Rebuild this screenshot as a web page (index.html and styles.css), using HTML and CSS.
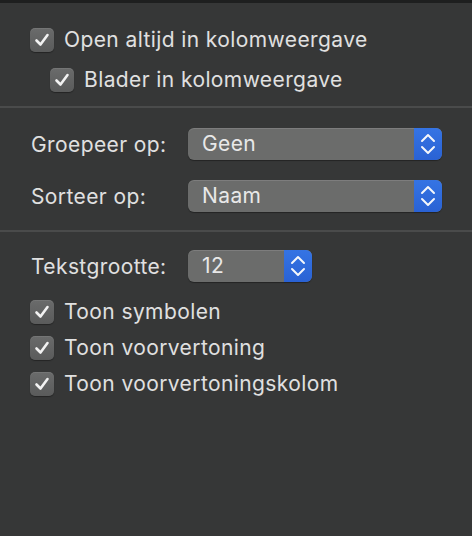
FILE: index.html
```html
<!DOCTYPE html>
<html>
<head>
<meta charset="utf-8">
<link rel="stylesheet" href="styles.css">
</head>
<body>
<div class="window">
  <section class="sec sec1">
    <label class="check-row">
      <span class="cb"><svg viewBox="0 0 24 24" width="24" height="24"><polyline points="6.5,12.5 10.5,16.5 17.5,7" /></svg></span>
      <span class="txt">Open altijd in kolomweergave</span>
    </label>
    <label class="check-row indent">
      <span class="cb"><svg viewBox="0 0 24 24" width="24" height="24"><polyline points="6.5,12.5 10.5,16.5 17.5,7" /></svg></span>
      <span class="txt">Blader in kolomweergave</span>
    </label>
  </section>
  <hr class="sep">
  <section class="sec sec2">
    <div class="field-row">
      <span class="lbl">Groepeer op:</span>
      <div class="popup wide">
        <span class="val">Geen</span>
        <span class="arrows"><svg viewBox="0 0 28 32" width="28" height="32"><polyline points="8,13 14,7 20,13" /><polyline points="8,19 14,25 20,19" /></svg></span>
      </div>
    </div>
    <div class="field-row">
      <span class="lbl">Sorteer op:</span>
      <div class="popup wide">
        <span class="val">Naam</span>
        <span class="arrows"><svg viewBox="0 0 28 32" width="28" height="32"><polyline points="8,13 14,7 20,13" /><polyline points="8,19 14,25 20,19" /></svg></span>
      </div>
    </div>
  </section>
  <hr class="sep">
  <section class="sec sec3">
    <div class="field-row">
      <span class="lbl">Tekstgrootte:</span>
      <div class="popup narrow">
        <span class="val">12</span>
        <span class="arrows"><svg viewBox="0 0 28 32" width="28" height="32"><polyline points="8,13 14,7 20,13" /><polyline points="8,19 14,25 20,19" /></svg></span>
      </div>
    </div>
    <div class="checks">
      <label class="check-row">
        <span class="cb"><svg viewBox="0 0 24 24" width="24" height="24"><polyline points="6.5,12.5 10.5,16.5 17.5,7" /></svg></span>
        <span class="txt">Toon symbolen</span>
      </label>
      <label class="check-row">
        <span class="cb"><svg viewBox="0 0 24 24" width="24" height="24"><polyline points="6.5,12.5 10.5,16.5 17.5,7" /></svg></span>
        <span class="txt">Toon voorvertoning</span>
      </label>
      <label class="check-row">
        <span class="cb"><svg viewBox="0 0 24 24" width="24" height="24"><polyline points="6.5,12.5 10.5,16.5 17.5,7" /></svg></span>
        <span class="txt">Toon voorvertoningskolom</span>
      </label>
    </div>
  </section>
</div>
</body>
</html>
```

FILE: styles.css
```css
html, body {
  margin: 0;
  padding: 0;
  background: #363737;
}
body {
  width: 472px;
  height: 536px;
  overflow: hidden;
  font-family: Inter, "Noto Sans", sans-serif;
  font-size: 21px;
  letter-spacing: 0.4px;
  color: #e0e0e0;
}
.window {
  border-top: 3px solid #1e1f1f;
  height: 533px;
  box-sizing: border-box;
}
.sec {
  display: flex;
  flex-direction: column;
  padding-left: 30px;
}
.sec1 {
  padding-top: 25px;
  padding-bottom: 14px;
  gap: 16px;
}
.sec2 {
  padding-top: 20px;
  padding-bottom: 18px;
  gap: 20px;
}
.sec3 {
  padding-top: 18px;
  gap: 18px;
}
.sep {
  margin: 0;
  border: 0;
  height: 2px;
  background: #4a4b4b;
}
.check-row {
  display: flex;
  align-items: center;
  gap: 10px;
  height: 24px;
}
.check-row.indent {
  padding-left: 20px;
}
.cb {
  width: 24px;
  height: 24px;
  border-radius: 5px;
  background: linear-gradient(#6a6b6b, #5a5b5b);
  box-shadow: inset 0 1px 0 rgba(255,255,255,0.08), 0 1px 1px rgba(0,0,0,0.35);
  display: flex;
  flex: none;
}
.cb svg polyline {
  fill: none;
  stroke: #f2f2f2;
  stroke-width: 2.6;
  stroke-linecap: round;
  stroke-linejoin: round;
}
.txt {
  line-height: 24px;
}
.field-row {
  display: flex;
  align-items: center;
  height: 32px;
}
.lbl {
  width: 158px;
  padding-left: 1px;
  box-sizing: border-box;
}
.popup {
  display: flex;
  height: 32px;
  border-radius: 6px;
  overflow: hidden;
  background: #6b6c6b;
  box-shadow: inset 0 1px 0 rgba(255,255,255,0.12), 0 1px 1px rgba(0,0,0,0.35);
}
.popup.wide { width: 254px; }
.popup.narrow { width: 124px; }
.val {
  flex: 1;
  padding-left: 14px;
  line-height: 32px;
  color: #e8e8e8;
}
.arrows {
  width: 28px;
  height: 32px;
  background: linear-gradient(#3574e4, #2a62d4);
  flex: none;
}
.arrows svg polyline {
  fill: none;
  stroke: #f4f6fb;
  stroke-width: 2;
  stroke-linecap: round;
  stroke-linejoin: round;
}
.checks {
  display: flex;
  flex-direction: column;
  gap: 12px;
}
```
